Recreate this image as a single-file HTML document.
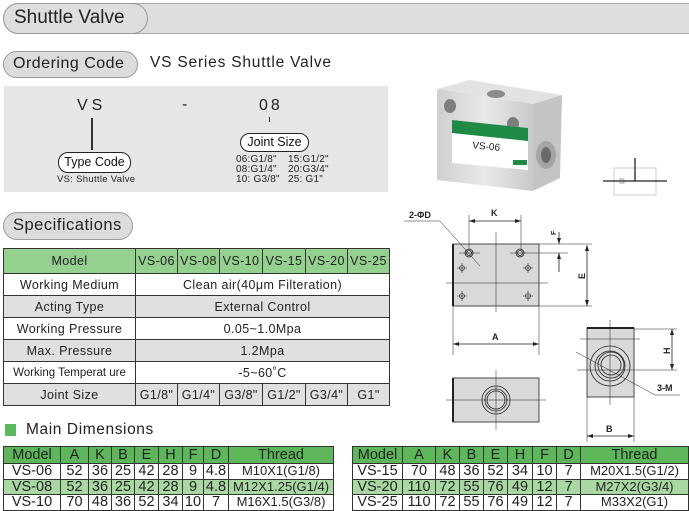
<!DOCTYPE html>
<html><head><meta charset="utf-8"><style>
*{margin:0;padding:0;box-sizing:border-box}
body{width:689px;height:510px;background:#fff;position:relative;overflow:hidden;font-family:"Liberation Sans",Arial,sans-serif;color:#222}
.abs{position:absolute}
.pill{position:absolute;background:#dcdcdc;border:1.5px solid #999;border-radius:16px;color:#222}
.wp{position:absolute;background:#fff;border:1.5px solid #222;border-radius:10px;text-align:center;color:#111}
table{border-collapse:collapse;position:absolute;table-layout:fixed}
.spec td{border:1px solid #333;text-align:center;font-size:12.5px;letter-spacing:.4px;height:22px;padding:0}
.spec tr.h td{background:#94d08e;height:25px}
.spec tr.g td{background:#e0e0e0}
.dim td{border:1px solid #333;text-align:center;font-size:14.5px;height:15.5px;padding:0;line-height:14px}
.dim tr.h td{background:#5db75a;height:17px}
.dim tr.l td{background:#a9d8a3}
.dim td.t{font-size:13px}
</style></head><body>
<div class="abs" style="left:3px;top:3px;width:686px;height:31px;background:#dedede;border:1px solid #aaa;border-right:none;border-radius:16px 0 0 16px"></div>
<div class="pill" style="left:3px;top:3px;width:145px;height:31px;font-size:19px;line-height:28px;padding-left:10px;background:#dedede">Shuttle Valve</div>

<div class="pill" style="left:3px;top:51px;width:135px;height:27px;font-size:16px;line-height:24px;padding-left:9px;letter-spacing:.5px">Ordering Code</div>
<div class="abs" style="left:150px;top:54px;font-size:15.5px;letter-spacing:.8px">VS Series Shuttle Valve</div>

<div class="abs" style="left:4px;top:86px;width:384px;height:106px;background:#e6e6e6"></div>
<div class="abs" style="left:77px;top:97px;font-size:16px;letter-spacing:4px">VS</div>
<div class="abs" style="left:182px;top:96px;font-size:16px">-</div>
<div class="abs" style="left:259px;top:97px;font-size:16px;letter-spacing:3px">08</div>
<div class="abs" style="left:91px;top:118px;width:1.5px;height:32px;background:#333"></div>
<div class="abs" style="left:269px;top:117px;width:1px;height:5px;background:#333"></div>
<div class="wp" style="left:58px;top:152px;width:73px;height:21px;font-size:12.5px;line-height:18px">Type Code</div>
<div class="abs" style="left:57px;top:174px;font-size:9.5px;letter-spacing:.3px">VS: Shuttle Valve</div>
<div class="wp" style="left:240px;top:133px;width:69px;height:19px;font-size:12.5px;line-height:16px">Joint Size</div>
<div class="abs" style="left:236px;top:155px;font-size:10px;line-height:10px;letter-spacing:.2px">06:G1/8"<br>08:G1/4"<br>10: G3/8"</div>
<div class="abs" style="left:288px;top:155px;font-size:10px;line-height:10px;letter-spacing:.2px">15:G1/2"<br>20:G3/4"<br>25: G1"</div>

<div class="pill" style="left:3px;top:212px;width:130px;height:28px;font-size:16.5px;line-height:25px;padding-left:9px;letter-spacing:.5px">Specifications</div>

<table class="spec" style="left:3px;top:248px;width:386px">
<colgroup><col style="width:132px"><col style="width:42px"><col style="width:42px"><col style="width:43px"><col style="width:43px"><col style="width:42px"><col style="width:42px"></colgroup>
<tr class="h"><td>Model</td><td>VS-06</td><td>VS-08</td><td>VS-10</td><td>VS-15</td><td>VS-20</td><td>VS-25</td></tr>
<tr><td>Working Medium</td><td colspan="6">Clean air(40μm Filteration)</td></tr>
<tr class="g"><td>Acting Type</td><td colspan="6">External Control</td></tr>
<tr><td>Working Pressure</td><td colspan="6">0.05~1.0Mpa</td></tr>
<tr class="g"><td>Max. Pressure</td><td colspan="6">1.2Mpa</td></tr>
<tr><td style="font-size:11.5px;letter-spacing:0">Working Temperat ure</td><td colspan="6">-5~60˚C</td></tr>
<tr class="g"><td>Joint Size</td><td>G1/8"</td><td>G1/4"</td><td>G3/8"</td><td>G1/2"</td><td>G3/4"</td><td>G1"</td></tr>
</table>

<div class="abs" style="left:5px;top:424px;width:11px;height:12px;background:#5cb85c"></div>
<div class="abs" style="left:26px;top:421px;font-size:15.5px;letter-spacing:.6px">Main Dimensions</div>

<table class="dim" style="left:3px;top:446px;width:330px">
<colgroup><col style="width:57px"><col style="width:28px"><col style="width:23px"><col style="width:23px"><col style="width:24px"><col style="width:24px"><col style="width:21px"><col style="width:25px"><col style="width:105px"></colgroup>
<tr class="h"><td>Model</td><td>A</td><td>K</td><td>B</td><td>E</td><td>H</td><td>F</td><td>D</td><td>Thread</td></tr>
<tr><td>VS-06</td><td>52</td><td>36</td><td>25</td><td>42</td><td>28</td><td>9</td><td>4.8</td><td class="t">M10X1(G1/8)</td></tr>
<tr class="l"><td>VS-08</td><td>52</td><td>36</td><td>25</td><td>42</td><td>28</td><td>9</td><td>4.8</td><td class="t">M12X1.25(G1/4)</td></tr>
<tr><td>VS-10</td><td>70</td><td>48</td><td>36</td><td>52</td><td>34</td><td>10</td><td>7</td><td class="t">M16X1.5(G3/8)</td></tr>
</table>
<table class="dim" style="left:352px;top:446px;width:336px">
<colgroup><col style="width:50px"><col style="width:33px"><col style="width:24px"><col style="width:24px"><col style="width:24px"><col style="width:25px"><col style="width:24px"><col style="width:24px"><col style="width:108px"></colgroup>
<tr class="h"><td>Model</td><td>A</td><td>K</td><td>B</td><td>E</td><td>H</td><td>F</td><td>D</td><td>Thread</td></tr>
<tr><td>VS-15</td><td>70</td><td>48</td><td>36</td><td>52</td><td>34</td><td>10</td><td>7</td><td class="t">M20X1.5(G1/2)</td></tr>
<tr class="l"><td>VS-20</td><td>110</td><td>72</td><td>55</td><td>76</td><td>49</td><td>12</td><td>7</td><td class="t">M27X2(G3/4)</td></tr>
<tr><td>VS-25</td><td>110</td><td>72</td><td>55</td><td>76</td><td>49</td><td>12</td><td>7</td><td class="t">M33X2(G1)</td></tr>
</table>

<svg class="abs" style="left:0;top:0" width="689" height="446" viewBox="0 0 689 446">
<defs><linearGradient id="fr" x1="0" x2="1"><stop offset="0" stop-color="#cfcfcf"/><stop offset=".5" stop-color="#e9e9e9"/><stop offset="1" stop-color="#c9c9c9"/></linearGradient></defs>
<polygon points="437,89 470,80 562,95 533,104" fill="#e2e2e2"/>
<polygon points="533,104 562,95 560,178 533,191" fill="#c4c4c4"/>
<polygon points="437,89 533,104 533,191 437,180" fill="url(#fr)"/>
<ellipse cx="496" cy="94" rx="9" ry="4" fill="#8a8a8a"/>
<ellipse cx="450" cy="106" rx="6" ry="7" fill="#7d7d7d"/>
<ellipse cx="513" cy="124" rx="6" ry="7" fill="#7d7d7d"/>
<ellipse cx="546" cy="155" rx="10" ry="14" fill="#a5a5a5"/>
<ellipse cx="546" cy="155" rx="5" ry="8" fill="#6a6a6a"/>
<polygon points="452,120 528,128 528,170 452,163" fill="#fff"/>
<polygon points="452,120 528,128 528,141 452,133" fill="#1f8a45"/>
<text x="472" y="150" font-size="10" font-family="Liberation Sans" fill="#222" transform="rotate(5 490 150)">VS-06</text>
<rect x="513" y="160" width="14" height="5" fill="#1f8a45"/>
<rect x="614" y="168" width="42" height="27" fill="none" stroke="#ccc"/>
<line x1="603" y1="181" x2="667" y2="181" stroke="#222" stroke-width="1.3"/>
<line x1="635" y1="158" x2="635" y2="181" stroke="#222" stroke-width="1.3"/>
<rect x="620" y="179" width="4" height="4" fill="none" stroke="#666" stroke-width=".6"/>
<g stroke="#222" stroke-width=".8" fill="none">
<rect x="453" y="244" width="86" height="62" fill="#d9d9d9"/>
<line x1="453" y1="244" x2="453" y2="306" stroke-width="2"/>
<line x1="496" y1="232" x2="496" y2="312" stroke-width=".5"/>
<line x1="446" y1="283" x2="548" y2="283" stroke-width=".5"/>
<circle cx="469" cy="253" r="4"/><circle cx="469" cy="253" r="2.5"/>
<circle cx="520" cy="253" r="4"/><circle cx="520" cy="253" r="2.5"/>
<line x1="459" y1="253" x2="480" y2="253" stroke-width=".5"/><line x1="510" y1="253" x2="568" y2="253" stroke-width=".5"/>
<g stroke-width=".6"><circle cx="462" cy="268" r="2.5"/><circle cx="528" cy="268" r="2.5"/><circle cx="462" cy="296" r="2.5"/><circle cx="528" cy="296" r="2.5"/>
<path d="M457 268h10M462 263v10M523 268h10M528 263v10M457 296h10M462 291v10M523 296h10M528 291v10"/></g>
<path d="M404 221h36l40 45" stroke-width=".5"/>
<path d="M469 215v35M521 215v35" stroke-width=".5"/>
<path d="M469 221h52" />
<path d="M539 244h53M539 306h53M453 306v49M539 306v49" stroke-width=".5"/>
<path d="M587 245v61M559 232v12M559 253v19M453 344h86"/>
<rect x="453" y="378" width="86" height="44" fill="#d9d9d9"/>
<line x1="453" y1="378" x2="453" y2="422" stroke-width="2"/>
<path d="M496 370v60M446 400h100" stroke-width=".5"/>
<circle cx="496" cy="400" r="14"/><circle cx="496" cy="400" r="11"/><circle cx="496" cy="400" r="9"/>
<rect x="587" y="328" width="47" height="69" fill="#d9d9d9"/>
<line x1="587" y1="328" x2="634" y2="328" stroke-width="2"/>
<path d="M610 320v85M580 339h60M577 370h100M634 329h43M587 397v45M634 397v45" stroke-width=".5"/>
<circle cx="610" cy="366" r="20"/><circle cx="610" cy="366" r="15"/><circle cx="611" cy="365" r="13"/><circle cx="611" cy="365" r="10"/>
<path d="M576 352l79 43h25" stroke-width=".5"/>
<path d="M672 329v41M587 436h47"/>
</g>
<g fill="#222">
<path d="M469 221l6-2v4zM521 221l-6-2v4zM453 344l6-2v4zM539 344l-6-2v4zM587 245l-2 6h4zM587 306l-2-6h4zM559 244l-2-6h4zM559 253l-2 6h4zM672 329l-2 6h4zM672 370l-2-6h4zM587 436l6-2v4zM634 436l-6-2v4z"/>
</g>
<g font-family="Liberation Sans" font-size="9" font-weight="bold" fill="#222">
<text x="409" y="218">2-ΦD</text><text x="491" y="216">K</text><text x="492" y="340">A</text>
<text x="606" y="432">B</text><text x="657" y="391">3-M</text>
<text x="0" y="0" transform="translate(585 279) rotate(-90)">E</text>
<text x="0" y="0" transform="translate(556 235) rotate(-90)" font-size="7">F</text>
<text x="0" y="0" transform="translate(670 354) rotate(-90)">H</text>
</g>
</svg>
</body></html>
